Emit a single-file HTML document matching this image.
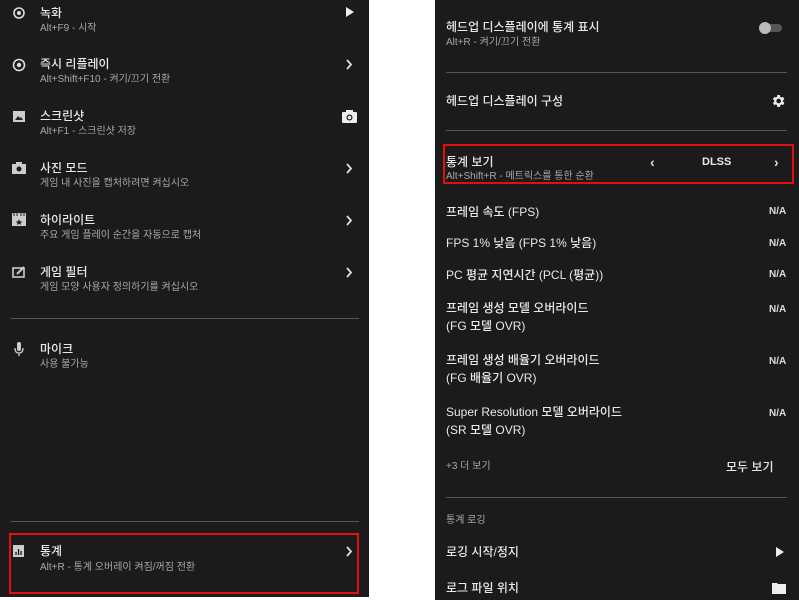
<!DOCTYPE html>
<html><head><meta charset="utf-8"><style>
*{margin:0;padding:0;box-sizing:border-box}
body{width:799px;height:600px;background:#fff;position:relative;overflow:hidden;font-family:"Liberation Sans","Noto Sans CJK KR",sans-serif;}
.p{position:absolute;background:#1b1b1b}
.t{position:absolute;color:#e8e8e8;font-size:12px;white-space:nowrap;line-height:14px;font-weight:500}
.s{position:absolute;color:#a8a8a8;font-size:10px;white-space:nowrap;line-height:12px}
.hr{position:absolute;height:1px;background:#555}
.box{position:absolute;border:2px solid #e01010}
.na{position:absolute;color:#ddd;font-size:10px;font-weight:bold;line-height:12px}
.ch{position:absolute;color:#ddd;font-size:14px;line-height:14px;font-weight:bold}
svg{position:absolute}
</style></head><body>
<div class="p" style="left:0;top:0;width:369px;height:597px"></div>
<div class="p" style="left:435px;top:0;width:364px;height:600px"></div>

<svg style="left:12px;top:6px" width="14" height="14" viewBox="0 0 14 14"><circle cx="7" cy="7" r="5" fill="none" stroke="#ddd" stroke-width="1.6"/><circle cx="7" cy="7" r="2" fill="#ddd"/></svg>
<div class="t" style="left:40px;top:6px">녹화</div><div class="s" style="left:40px;top:23px">Alt+F9 - 시작</div>
<svg style="left:345px;top:6px" width="10" height="12"><path d="M1 1L9 6L1 11Z" fill="#eee"/></svg>

<svg style="left:12px;top:58px" width="14" height="14"><circle cx="7" cy="7" r="5.5" fill="none" stroke="#ddd" stroke-width="1.6"/><circle cx="7" cy="7" r="2.2" fill="#ddd"/></svg>
<div class="t" style="left:40px;top:57px">즉시 리플레이</div><div class="s" style="left:40px;top:74px">Alt+Shift+F10 - 켜기/끄기 전환</div>
<svg style="left:345px;top:59px" width="8" height="11"><path d="M2 1L6 5.5L2 10" stroke="#ddd" stroke-width="1.8" fill="none"/></svg>

<svg style="left:13px;top:111px" width="12" height="11"><rect width="12" height="11" fill="#ccc"/><path d="M2 9L5 5L7 7L8 6L10 9Z" fill="#222"/></svg>
<div class="t" style="left:40px;top:109px">스크린샷</div><div class="s" style="left:40px;top:126px">Alt+F1 - 스크린샷 저장</div>
<svg style="left:342px;top:110px" width="15" height="13"><rect y="2" width="15" height="11" rx="1" fill="#eee"/><rect x="4" y="0" width="7" height="3" fill="#eee"/><circle cx="7.5" cy="7.5" r="3" fill="#1b1b1b"/><circle cx="7.5" cy="7.5" r="1.8" fill="#eee"/></svg>

<svg style="left:12px;top:162px" width="14" height="12"><rect y="2" width="14" height="10" fill="#ccc"/><rect x="4" y="0" width="6" height="3" fill="#ccc"/><circle cx="7" cy="7" r="2.5" fill="#1b1b1b"/></svg>
<div class="t" style="left:40px;top:161px">사진 모드</div><div class="s" style="left:40px;top:178px">게임 내 사진을 캡처하려면 켜십시오</div>
<svg style="left:345px;top:163px" width="8" height="11"><path d="M2 1L6 5.5L2 10" stroke="#ddd" stroke-width="1.8" fill="none"/></svg>

<svg style="left:12px;top:213px" width="14" height="13"><rect width="14" height="13" fill="#ccc"/><path d="M2 0V3M5 0V3M9 0V3M12 0V3" stroke="#1b1b1b"/><path d="M7 6L8 8.5L10.5 8.5L8.5 10L9.2 12L7 10.8L4.8 12L5.5 10L3.5 8.5L6 8.5Z" fill="#1b1b1b"/></svg>
<div class="t" style="left:40px;top:213px">하이라이트</div><div class="s" style="left:40px;top:230px">주요 게임 플레이 순간을 자동으로 캡처</div>
<svg style="left:345px;top:215px" width="8" height="11"><path d="M2 1L6 5.5L2 10" stroke="#ddd" stroke-width="1.8" fill="none"/></svg>

<svg style="left:12px;top:266px" width="14" height="12"><rect x="1" y="2" width="11" height="9" fill="none" stroke="#ccc" stroke-width="1.6"/><path d="M5 8L12 1" stroke="#ccc" stroke-width="2"/></svg>
<div class="t" style="left:40px;top:265px">게임 필터</div><div class="s" style="left:40px;top:282px">게임 모양 사용자 정의하기를 켜십시오</div>
<svg style="left:345px;top:267px" width="8" height="11"><path d="M2 1L6 5.5L2 10" stroke="#ddd" stroke-width="1.8" fill="none"/></svg>

<div class="hr" style="left:11px;top:318px;width:348px"></div>

<svg style="left:14px;top:342px" width="10" height="15"><rect x="3" y="0" width="4" height="9" rx="2" fill="#ccc"/><path d="M1 6Q1 11 5 11Q9 11 9 6M5 11V14" stroke="#ccc" fill="none" stroke-width="1.3"/></svg>
<div class="t" style="left:40px;top:342px">마이크</div><div class="s" style="left:40px;top:359px">사용 불가능</div>

<div class="hr" style="left:11px;top:521px;width:348px"></div>
<div class="box" style="left:9px;top:533px;width:350px;height:61px"></div>
<svg style="left:13px;top:545px" width="11" height="12"><rect width="11" height="12" fill="#ccc"/><path d="M3 10V7M5.5 10V4M8 10V6" stroke="#1b1b1b" stroke-width="1.3"/></svg>
<div class="t" style="left:40px;top:544px">통계</div><div class="s" style="left:40px;top:562px">Alt+R - 통계 오버레이 켜짐/꺼짐 전환</div>
<svg style="left:345px;top:546px" width="8" height="11"><path d="M2 1L6 5.5L2 10" stroke="#ddd" stroke-width="1.8" fill="none"/></svg>

<div class="t" style="left:446px;top:20px">헤드업 디스플레이에 통계 표시</div><div class="s" style="left:446px;top:37px">Alt+R - 켜기/끄기 전환</div>
<svg style="left:758px;top:22px" width="26" height="12"><rect x="2" y="2" width="22" height="8" rx="4" fill="#555"/><circle cx="7" cy="6" r="6" fill="#bbb"/></svg>
<div class="hr" style="left:446px;top:72px;width:341px"></div>
<div class="t" style="left:446px;top:94px">헤드업 디스플레이 구성</div>
<svg style="left:770px;top:93px" width="16" height="16" viewBox="0 0 24 24"><path fill="#eee" d="M19.4 13a7.5 7.5 0 000-2l2.1-1.6-2-3.5-2.5 1a7.6 7.6 0 00-1.7-1L15 3h-4l-.4 2.9a7.6 7.6 0 00-1.7 1l-2.5-1-2 3.5L6.5 11a7.5 7.5 0 000 2l-2.1 1.6 2 3.5 2.5-1a7.6 7.6 0 001.7 1L11 21h4l.4-2.9a7.6 7.6 0 001.7-1l2.5 1 2-3.5zM13 15.5a3.5 3.5 0 110-7 3.5 3.5 0 010 7z"/></svg>
<div class="hr" style="left:446px;top:130px;width:341px"></div>

<div class="box" style="left:443px;top:144px;width:351px;height:40px"></div>
<div class="t" style="left:446px;top:155px">통계 보기</div><div class="s" style="left:446px;top:171px">Alt+Shift+R - 메트릭스를 통한 순환</div>
<div class="ch" style="left:650px;top:155px">‹</div>
<div class="t" style="left:702px;top:155px;font-size:11px;font-weight:bold">DLSS</div>
<div class="ch" style="left:774px;top:155px">›</div>

<div class="t" style="left:446px;top:205px">프레임 속도 (FPS)</div><div class="na" style="left:769px;top:206px">N/A</div>
<div class="t" style="left:446px;top:236px">FPS 1% 낮음 (FPS 1% 낮음)</div><div class="na" style="left:769px;top:238px">N/A</div>
<div class="t" style="left:446px;top:268px">PC 평균 지연시간 (PCL (평균))</div><div class="na" style="left:769px;top:269px">N/A</div>
<div class="t" style="left:446px;top:301px">프레임 생성 모델 오버라이드</div><div class="t" style="left:446px;top:319px">(FG 모델 OVR)</div><div class="na" style="left:769px;top:304px">N/A</div>
<div class="t" style="left:446px;top:353px">프레임 생성 배율기 오버라이드</div><div class="t" style="left:446px;top:371px">(FG 배율기 OVR)</div><div class="na" style="left:769px;top:356px">N/A</div>
<div class="t" style="left:446px;top:405px">Super Resolution 모델 오버라이드</div><div class="t" style="left:446px;top:423px">(SR 모델 OVR)</div><div class="na" style="left:769px;top:408px">N/A</div>
<div class="s" style="left:446px;top:461px">+3 더 보기</div>
<div class="t" style="left:726px;top:460px">모두 보기</div>
<div class="hr" style="left:446px;top:497px;width:341px"></div>
<div class="s" style="left:446px;top:515px">통계 로깅</div>
<div class="t" style="left:446px;top:545px">로깅 시작/정지</div>
<svg style="left:775px;top:546px" width="10" height="12"><path d="M1 1L9 6L1 11Z" fill="#eee"/></svg>
<div class="t" style="left:446px;top:581px">로그 파일 위치</div>
<svg style="left:772px;top:582px" width="14" height="12"><path d="M0 1H5L6 2H14V12H0Z" fill="#eee"/></svg>
</body></html>
